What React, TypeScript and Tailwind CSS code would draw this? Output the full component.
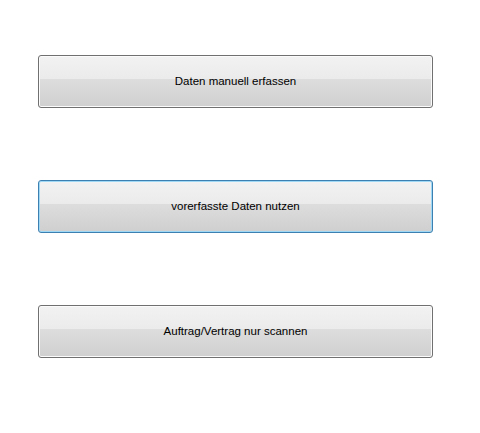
const buttons = [
  { label: 'Daten manuell erfassen', focused: false },
  { label: 'vorerfasste Daten nutzen', focused: true },
  { label: 'Auftrag/Vertrag nur scannen', focused: false },
]

const App = () => {
  return (
    <div className="w-[480px] h-[433px] bg-white font-['Liberation_Sans',Arial,sans-serif]">
      <div className="flex flex-col gap-[72px] pt-[55px] pl-[38px]">
        {buttons.map((b) => (
          <button
            key={b.label}
            className={
              b.focused
                ? 'w-[395px] h-[53px] rounded-[3px] border border-[#3c7fb1] shadow-[inset_0_0_0_1px_#9fd8f5] bg-[linear-gradient(to_bottom,#f2f2f2_0%,#ebebeb_45%,#dddddd_46%,#cfcfcf_100%)] text-[11.5px] text-black'
                : 'w-[395px] h-[53px] rounded-[3px] border border-[#707070] shadow-[inset_0_0_0_1px_#fbfbfb] bg-[linear-gradient(to_bottom,#f2f2f2_0%,#ebebeb_45%,#dddddd_46%,#cfcfcf_100%)] text-[11.5px] text-black'
            }
          >
            {b.label}
          </button>
        ))}
      </div>
    </div>
  )
}

export default App
